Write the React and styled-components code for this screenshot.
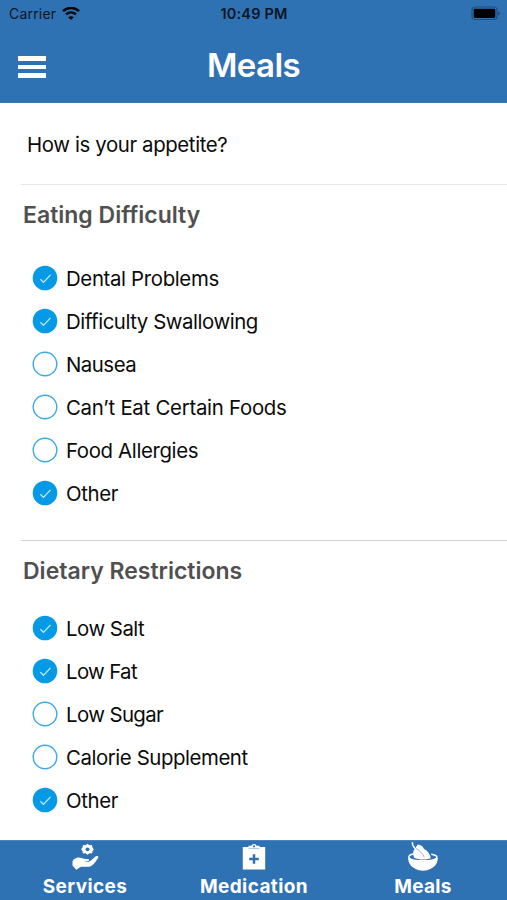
import styled, { createGlobalStyle } from 'styled-components'

const GlobalStyle = createGlobalStyle`
  * { box-sizing: border-box; }
  body {
    margin: 0;
    background: #fff;
    font-family: Inter, Roboto, sans-serif;
  }
`

const Screen = styled.div`
  width: 507px;
  height: 900px;
  display: flex;
  flex-direction: column;
  overflow: hidden;
  background: #fff;
  color: #0b0b0b;
`

const Header = styled.header`
  height: 103px;
  flex: none;
  background: #2f72b4;
  border-bottom: 1px solid #3f79b0;
`

const StatusBar = styled.div`
  height: 27px;
  padding: 0 8px 0 9px;
  display: grid;
  grid-template-columns: 1fr auto 1fr;
  align-items: center;
  color: #081625;
`

const Carrier = styled.div`
  display: flex;
  align-items: center;
  gap: 6px;
  font-size: 14px;
  letter-spacing: 0.2px;
`

const Clock = styled.div`
  font-size: 14.5px;
  font-weight: 600;
  letter-spacing: 0.2px;
`

const Battery = styled.svg`
  justify-self: end;
  margin-right: -2px;
`

const NavBar = styled.div`
  height: 75px;
  padding: 0 18px;
  display: grid;
  grid-template-columns: 1fr auto 1fr;
  align-items: center;
`

const MenuButton = styled.button`
  width: 28px;
  height: 22px;
  margin-top: 5px;
  padding: 0;
  border: 0;
  background: none;
  display: flex;
  flex-direction: column;
  justify-content: space-between;

  span {
    width: 28px;
    height: 4.6px;
    background: #fff;
  }
`

const Title = styled.h1`
  margin: 0;
  color: #fff;
  font-size: 33px;
  line-height: 40px;
  font-weight: 600;
  letter-spacing: ${p => p.$spacing}px;
`

const Content = styled.main`
  flex: 1;
  min-height: 0;
  padding-left: 21px;
`

const Question = styled.div`
  height: 81px;
  padding-left: 6px;
  line-height: 83px;
  font-size: 20.4px;
  letter-spacing: ${p => p.$spacing}px;
`

const Section = styled.section`
  height: ${p => p.$height}px;
  border-top: 1px solid ${p => p.$line};
`

const SectionTitle = styled.h2`
  margin: 0;
  height: ${p => p.$height}px;
  padding: 15px 0 0 2px;
  line-height: 31px;
  font-size: 23px;
  font-weight: 600;
  color: #505050;
  letter-spacing: ${p => p.$spacing}px;
`

const Options = styled.ul`
  margin: 0;
  padding: 0 0 0 11px;
  list-style: none;
`

const Option = styled.li`
  height: 43.15px;
  display: flex;
  align-items: center;
  gap: 8px;
`

const OptionLabel = styled.span`
  line-height: 26px;
  padding-top: 2.4px;
  font-size: 20.4px;
  white-space: nowrap;
  letter-spacing: ${p => p.$spacing}px;
`

const TabBar = styled.nav`
  height: 60px;
  flex: none;
  display: grid;
  grid-template-columns: repeat(3, 1fr);
  background: #2f72b4;
  border-top: 1px solid #4c83b8;
`

const Tab = styled.div`
  padding-top: 2px;
  display: flex;
  flex-direction: column;
  align-items: center;
  color: #fff;

  svg {
    flex: none;
    overflow: visible;
  }
`

const TabLabel = styled.span`
  margin-top: 4px;
  padding-left: 1px;
  font-size: 19px;
  line-height: 24px;
  font-weight: 700;
  letter-spacing: ${p => p.$spacing}px;
`

const Wifi = () => (
  <svg width="18" height="14" viewBox="0 0 18 14" fill="none" stroke="#03080e" strokeWidth="2.5">
    <path d="M1 4.1C5.6-.2 12.4-.2 17 4.1" />
    <path d="M4 7.4c2.9-2.6 7.1-2.6 10 0" />
    <path d="M9 13.1 6.2 10.3c1.6-1.5 4-1.5 5.6 0Z" fill="#03080e" stroke="none" />
  </svg>
)

const Check = ({ checked }) => (
  <svg width="26" height="26" viewBox="0 0 26 26" fill="none">
    {checked ? (
      <>
        <circle cx="13" cy="13" r="12.3" fill="#069ae6" />
        <path d="M8.4 14.2 11.5 17.4 18.5 9.9" stroke="#c4e9fb" strokeWidth="1.3" />
      </>
    ) : (
      <circle cx="13" cy="13" r="11.8" stroke="#3daae4" strokeWidth="1.4" />
    )}
  </svg>
)

const ServicesIcon = () => (
  <svg width="28" height="28" viewBox="0 0 28 28">
    <path d="m16.5 .8 2 1.5 2.5-.3.5 2.4 1.3 1.9-1.3 1.9-.5 2.4-2.5-.3-2 1.5-2-1.5-2.5.3-.5-2.4-1.3-1.9 1.3-1.9.5-2.4 2.5.3Z" fill="#fff" />
    <circle cx="16.5" cy="6.3" r="1.9" fill="#2f72b4" />
    <path d="M1.5 18.2c1.5-2.5 3.5-3.7 6.2-3.7 3 0 4.2 1.5 7 1.5h2.1c1.5 0 1.8 1.8.3 2.2l-4 .5c2 .6 5 .5 6.5-.9l4.8-4.3c1.3-1.1 3.6-.4 2.8 1.2-1.7 3-4.5 6.8-6.9 8.2-1.8 1-4.8 1-7.6.9-2-.1-3 0-4.5 1L5.3 26.7 1.5 22.5Z" fill="#fff" />
  </svg>
)

const MedicationIcon = () => (
  <svg width="28" height="28" viewBox="0 0 28 28">
    <path d="M2.8 4h5.7V2.8h2.7a3 3 0 0 1 5.6 0h2.7V4h5.7v22.5H2.8Z" fill="#fff" />
    <path d="M8.8 5.4h10.4" stroke="#9abbdc" strokeWidth=".9" />
    <circle cx="14" cy="3.3" r="1.1" fill="#2f72b4" />
    <path d="M14 11.2v9.6M9.2 16h9.6" stroke="#2f72b4" strokeWidth="2.5" />
  </svg>
)

const MealsIcon = () => (
  <svg width="32" height="28" viewBox="0 1 32 28">
    <path d="M5.4.2c-.3 2.3.6 4.4 2.6 6.2" fill="none" stroke="#fff" strokeWidth="1.4" />
    <path d="M7 15.4C5.5 11.8 5.8 8.6 8.2 6.2l2.5-3.6c3.1.3 5.2 1.6 6.1 4.1 4 1.9 6.4 5.4 6.9 9.5-5.5 2-12.4 1.8-16.7-.8Z" fill="#fff" />
    <path d="M9 6.6c3.5 1.5 6.5 4.6 8.4 8.7" fill="none" stroke="#7ba6d0" strokeWidth=".8" />
    <path d="M6.1 12.1C2 13 .9 14.6 2.4 16.2c3.2 3.3 23.6 3.6 27 0 1.5-1.7-.4-3.1-5.1-4" fill="none" stroke="#fff" strokeWidth="1.5" />
    <path d="M1.2 15.6C3.8 20.1 27.8 20.5 30.7 15.6c.3 5.2-2.4 9.2-6.9 11.2-4.3 2.6-11.3 2.6-15.6 0C3.7 24.8 1 20.8 1.2 15.6Z" fill="#fff" />
  </svg>
)

const difficulties = [
  { label: 'Dental Problems', checked: true, spacing: -0.35 },
  { label: 'Difficulty Swallowing', checked: true, spacing: -0.45 },
  { label: 'Nausea', spacing: -0.5 },
  { label: 'Can’t Eat Certain Foods', spacing: -0.27 },
  { label: 'Food Allergies', spacing: -0.36 },
  { label: 'Other', checked: true, spacing: -0.35 },
]

const restrictions = [
  { label: 'Low Salt', checked: true, spacing: -0.5 },
  { label: 'Low Fat', checked: true, spacing: -0.65 },
  { label: 'Low Sugar', spacing: -0.6 },
  { label: 'Calorie Supplement', spacing: -0.43 },
  { label: 'Other', checked: true, spacing: -0.35 },
]

const tabs = [
  { label: 'Services', Icon: ServicesIcon, spacing: 0.4 },
  { label: 'Medication', Icon: MedicationIcon, spacing: 0.4 },
  { label: 'Meals', Icon: MealsIcon, spacing: 0.3 },
]

const OptionList = ({ items }) => (
  <Options>
    {items.map(item => (
      <Option key={item.label}>
        <Check checked={item.checked} />
        <OptionLabel $spacing={item.spacing}>{item.label}</OptionLabel>
      </Option>
    ))}
  </Options>
)

const App = () => {
  return (
    <>
      <GlobalStyle />
      <Screen>
        <Header>
          <StatusBar>
            <Carrier>Carrier <Wifi /></Carrier>
            <Clock>10:49 PM</Clock>
            <Battery width="30" height="15" viewBox="0 0 30 15">
              <rect x="1" y="1" width="25" height="12.5" rx="3" fill="none" stroke="#1f4d7b" strokeWidth="1.2" />
              <rect x="2.7" y="2.7" width="21.6" height="9.2" rx="1.3" fill="#000" />
              <path d="M27.3 5.2q3 2 0 4.2Z" fill="#1b426b" />
            </Battery>
          </StatusBar>
          <NavBar>
            <MenuButton aria-label="Menu"><span /><span /><span /></MenuButton>
            <Title $spacing={-0.6}>Meals</Title>
          </NavBar>
        </Header>
        <Content>
          <Question $spacing={-0.38}>How is your appetite?</Question>
          <Section $height={356} $line="#e6e6e6">
            <SectionTitle $height={71} $spacing={0}>Eating Difficulty</SectionTitle>
            <OptionList items={difficulties} />
          </Section>
          <Section $height={299} $line="#d2d2d2">
            <SectionTitle $height={65} $spacing={0}>Dietary Restrictions</SectionTitle>
            <OptionList items={restrictions} />
          </Section>
        </Content>
        <TabBar>
          {tabs.map(({ label, Icon, spacing }) => (
            <Tab key={label}>
              <Icon />
              <TabLabel $spacing={spacing}>{label}</TabLabel>
            </Tab>
          ))}
        </TabBar>
      </Screen>
    </>
  )
}

export default App
